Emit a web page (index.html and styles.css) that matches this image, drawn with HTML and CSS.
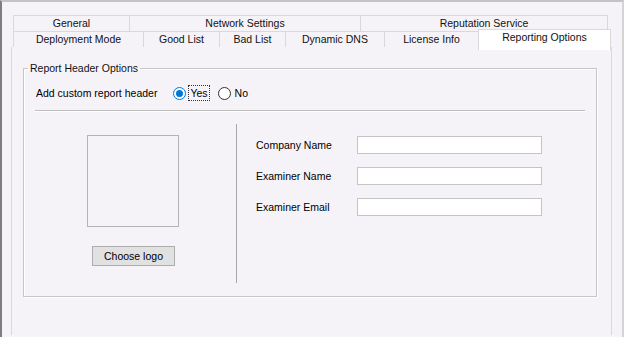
FILE: index.html
```html
<!DOCTYPE html>
<html lang="en">
<head>
  <meta charset="UTF-8">
  <meta name="viewport" content="width=device-width, initial-scale=1.0">
  <title>Options - Reporting Options</title>
  <link rel="stylesheet" href="styles.css">
</head>
<body>
  <div class="window">
    <div class="tabs">
      <div class="tab-row">
        <div class="tab" style="width: 116px;">General</div>
        <div class="tab" style="width: 231px;">Network Settings</div>
        <div class="tab last" style="width: 248px;">Reputation Service</div>
      </div>
      <div class="tab-row">
        <div class="tab" style="width: 130px;">Deployment Mode</div>
        <div class="tab" style="width: 76px;">Good List</div>
        <div class="tab" style="width: 66px;">Bad List</div>
        <div class="tab" style="width: 99px;">Dynamic DNS</div>
        <div class="tab" style="width: 94px;">License Info</div>
        <div class="tab last selected" style="width: 133px;">Reporting Options</div>
      </div>
    </div>

    <div class="panel">
      <fieldset class="group">
        <legend>Report Header Options</legend>

        <div class="header-row">
          <span class="field-label">Add custom report header</span>
          <span class="radio checked"></span>
          <span class="radio-text focused">Yes</span>
          <span class="radio"></span>
          <span class="radio-text">No</span>
        </div>

        <div class="separator"></div>

        <div class="columns">
          <div class="logo-col">
            <div class="logo-box"></div>
            <button class="btn">Choose logo</button>
          </div>
          <div class="form-col">
            <div class="form-row"><label>Company Name</label><input type="text"></div>
            <div class="form-row"><label>Examiner Name</label><input type="text"></div>
            <div class="form-row"><label>Examiner Email</label><input type="text"></div>
          </div>
        </div>
      </fieldset>
    </div>
  </div>
</body>
</html>
```

FILE: styles.css
```css
body {
  margin: 0;
  width: 624px;
  height: 337px;
  overflow: hidden;
  background: #f6f3f8;
  font-family: "Liberation Sans", Arial, sans-serif;
  font-size: 10.5px;
  color: #000;
}
.window {
  height: 337px;
  box-sizing: border-box;
  border-left: 2px solid #7e7e7e;
  border-top: 2px solid #c4c4c4;
  border-right: 2px solid #d4d4d4;
}
.tabs {
  margin-top: 13px;
  margin-left: 11px;
}
.tab-row {
  display: flex;
  height: 16px;
}
.tab {
  box-sizing: border-box;
  height: 16px;
  line-height: 15px;
  text-align: center;
  border-top: 1px solid #d9d9d9;
  border-left: 1px solid #d9d9d9;
  color: #111;
}
.tab.last {
  border-right: 1px solid #d9d9d9;
}
.tab.selected {
  position: relative;
  z-index: 1;
  height: 21px;
  margin-top: -2px;
  margin-bottom: -3px;
  line-height: 15px;
  background: #ffffff;
}
.panel {
  margin-left: 9px;
  width: 601px;
  height: 288px;
  box-sizing: border-box;
  border-left: 1px solid #d9d9d9;
  border-right: 1px solid #d9d9d9;
  padding-top: 15px;
  padding-left: 11px;
}
.group {
  margin: 0;
  padding: 0;
  width: 574px;
  height: 235px;
  box-sizing: border-box;
  border: 1px solid #c6c6c6;
  box-shadow: inset 1px 1px 0 #ffffff, 1px 1px 0 #ffffff;
}
.group legend {
  margin-left: 4px;
  padding: 0 2px;
  line-height: 13px;
  color: #111;
}
.header-row {
  display: flex;
  align-items: center;
  height: 16px;
  margin-top: 10px;
  padding-left: 12px;
}
.field-label {
  margin-right: 16px;
}
.radio {
  width: 13px;
  height: 13px;
  box-sizing: border-box;
  border: 1px solid #333;
  border-radius: 50%;
  background: #fff;
  display: flex;
  align-items: center;
  justify-content: center;
}
.radio.checked {
  border-color: #0078d7;
}
.radio.checked::after {
  content: "";
  width: 7px;
  height: 7px;
  border-radius: 50%;
  background: #0078d7;
}
.radio-text {
  margin-left: 2px;
  margin-right: 8px;
  padding: 0 1px;
  line-height: 14px;
  border: 1px dotted transparent;
}
.radio-text.focused {
  border-color: #333;
}
.separator {
  margin: 9px 11px 0 11px;
  border-top: 1px solid #bdbdbd;
  border-bottom: 1px solid #ffffff;
}
.columns {
  display: flex;
  margin-top: 12px;
  height: 159px;
}
.logo-col {
  width: 212px;
  padding-top: 11px;
}
.logo-box {
  width: 92px;
  height: 92px;
  box-sizing: border-box;
  margin-left: 63px;
  border: 1px solid #b4b4b4;
}
.btn {
  display: block;
  margin: 19px 0 0 68px;
  width: 83px;
  height: 20px;
  padding: 0;
  background: #e1e1e1;
  border: 1px solid #adadad;
  font-family: inherit;
  font-size: 10.5px;
  color: #000;
}
.form-col {
  border-left: 1px solid #a8a8a8;
  padding-left: 19px;
  padding-top: 12px;
}
.form-row {
  display: flex;
  align-items: center;
  height: 18px;
  margin-bottom: 13px;
}
.form-row label {
  width: 101px;
}
.form-row input {
  width: 185px;
  height: 18px;
  box-sizing: border-box;
  margin: 0;
  border: 1px solid #c4c4c4;
  background: #fff;
}
```
